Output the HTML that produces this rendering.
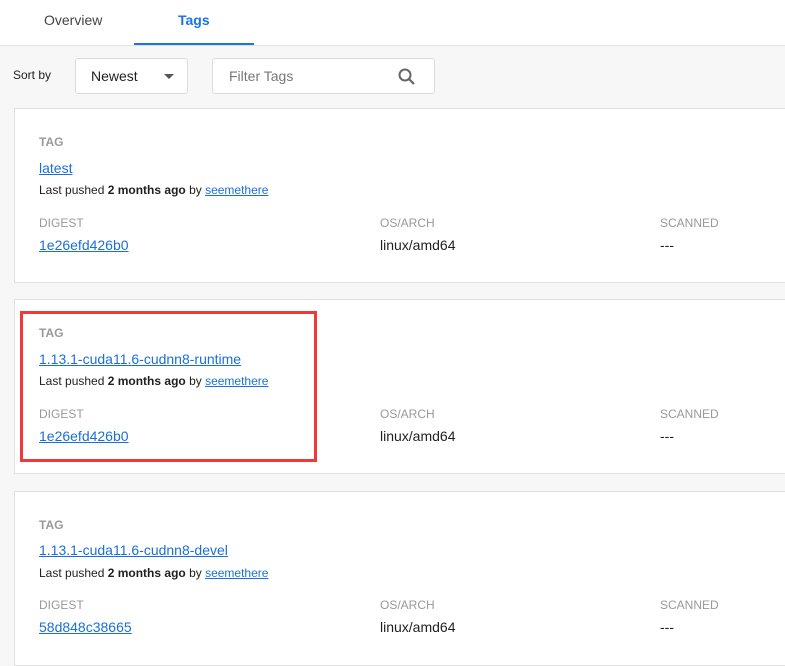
<!DOCTYPE html>
<html><head><style>
*{margin:0;padding:0;box-sizing:border-box}
body{width:785px;height:661px;overflow:hidden;background:#f7f7f7;font-family:"Liberation Sans",Arial,sans-serif;position:relative;color:#1f1f1f}
.hdr{position:absolute;left:0;top:0;width:785px;height:46px;background:#fff;border-bottom:1px solid #e2e2e2}
.t{position:absolute;top:12px;font-size:14px}
.ul{position:absolute;left:134px;top:43px;width:120px;height:2px;background:#1a73e8}
.abs{position:absolute}
.box{position:absolute;background:#fff;border:1px solid #dcdcdc;border-radius:3px}
.card{position:absolute;left:14px;width:780px;height:175px;background:#fff;border:1px solid #e0e0e0}
.lbl{position:absolute;font-size:12px;color:#999}
.lnk{position:absolute;color:#1a6fd8;text-decoration:underline;font-size:14px}
.sm{position:absolute;font-size:12px;color:#1f1f1f}
.sm a{color:#1a6fd8;text-decoration:underline}
.v{position:absolute;font-size:14px;color:#1f1f1f}
</style></head><body>
<div class="hdr">
<div class="t" style="left:44px;color:#444">Overview</div>
<div class="t" style="left:178px;color:#1a73e8;font-weight:bold">Tags</div>
<div class="ul"></div>
</div>
<div class="abs" style="left:13px;top:68px;font-size:12px">Sort by</div>
<div class="box" style="left:75px;top:58px;width:113px;height:36px"><span class="abs" style="left:15px;top:9px;font-size:14px">Newest</span><span class="abs" style="left:88px;top:15px;width:0;height:0;border-left:5px solid transparent;border-right:5px solid transparent;border-top:5px solid #555"></span></div>
<div class="box" style="left:212px;top:58px;width:223px;height:36px"><span class="abs" style="left:16px;top:9px;font-size:14px;color:#777">Filter Tags</span>
<svg class="abs" style="left:184px;top:8px" width="20" height="20" viewBox="0 0 20 20"><circle cx="8" cy="8" r="5.5" fill="none" stroke="#666" stroke-width="2"/><line x1="12" y1="12" x2="17" y2="17" stroke="#666" stroke-width="2.2"/></svg></div>

<div class="card" style="top:108px">
<div class="lbl" style="left:24px;top:26px;font-weight:bold">TAG</div>
<div class="lnk" style="left:24px;top:51px">latest</div>
<div class="sm" style="left:24px;top:74px">Last pushed <b>2 months ago</b> by <a>seemethere</a></div>
<div class="lbl" style="left:24px;top:107px">DIGEST</div>
<div class="lnk" style="left:24px;top:128px">1e26efd426b0</div>
<div class="lbl" style="left:365px;top:107px">OS/ARCH</div>
<div class="v" style="left:365px;top:128px">linux/amd64</div>
<div class="lbl" style="left:645px;top:107px">SCANNED</div>
<div class="v" style="left:645px;top:128px">---</div>
</div>

<div class="card" style="top:299px">
<div class="lbl" style="left:24px;top:26px;font-weight:bold">TAG</div>
<div class="lnk" style="left:24px;top:51px">1.13.1-cuda11.6-cudnn8-runtime</div>
<div class="sm" style="left:24px;top:74px">Last pushed <b>2 months ago</b> by <a>seemethere</a></div>
<div class="lbl" style="left:24px;top:107px">DIGEST</div>
<div class="lnk" style="left:24px;top:128px">1e26efd426b0</div>
<div class="lbl" style="left:365px;top:107px">OS/ARCH</div>
<div class="v" style="left:365px;top:128px">linux/amd64</div>
<div class="lbl" style="left:645px;top:107px">SCANNED</div>
<div class="v" style="left:645px;top:128px">---</div>
</div>
<div class="abs" style="left:20px;top:311px;width:297px;height:151px;border:3px solid #f03a3a"></div>

<div class="card" style="top:491px">
<div class="lbl" style="left:24px;top:26px;font-weight:bold">TAG</div>
<div class="lnk" style="left:24px;top:50px">1.13.1-cuda11.6-cudnn8-devel</div>
<div class="sm" style="left:24px;top:74px">Last pushed <b>2 months ago</b> by <a>seemethere</a></div>
<div class="lbl" style="left:24px;top:106px">DIGEST</div>
<div class="lnk" style="left:24px;top:127px">58d848c38665</div>
<div class="lbl" style="left:365px;top:106px">OS/ARCH</div>
<div class="v" style="left:365px;top:127px">linux/amd64</div>
<div class="lbl" style="left:645px;top:106px">SCANNED</div>
<div class="v" style="left:645px;top:127px">---</div>
</div>
</body></html>
